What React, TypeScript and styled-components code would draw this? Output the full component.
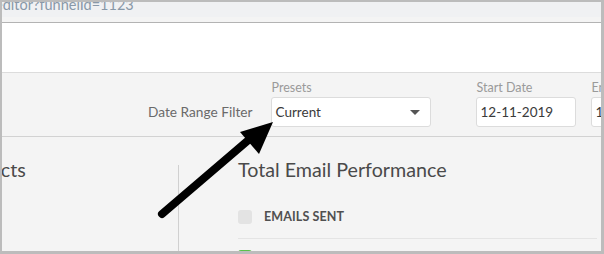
import styled, { createGlobalStyle } from "styled-components";

const Global = createGlobalStyle`
  html, body {
    margin: 0;
    padding: 0;
    background: #ffffff;
    overflow: hidden;
  }
  body {
    font-family: Lato, "Open Sans", sans-serif;
  }
`;

const Frame = styled.div`
  position: relative;
  width: 604px;
  height: 254px;
  box-sizing: border-box;
  border-style: solid;
  border-color: #bcbcbc;
  border-width: 2px 3px 3px 2px;
  overflow: hidden;
  display: flex;
  flex-direction: column;
  background: #f4f4f4;
`;

const UrlStrip = styled.div`
  height: 15px;
  background: #f0f1f3;
  overflow: hidden;
  flex-shrink: 0;
`;

const UrlText = styled.div`
  margin: -6px 0 0 -7px;
  font-size: 14.5px;
  line-height: 18px;
  color: #8898a8;
  white-space: nowrap;
`;

const PageHeader = styled.div`
  height: 49px;
  flex-shrink: 0;
  background: #ffffff;
  margin-top: 5px;
  border-top: 1px solid #b3b3b3;
  border-bottom: 1px solid #dcdcdc;
`;

const FilterBar = styled.div`
  height: 64px;
  flex-shrink: 0;
  display: flex;
  align-items: flex-end;
  padding: 0 0 9px 146px;
  box-sizing: border-box;
  border-bottom: 1px solid #d2d2d2;
  white-space: nowrap;
`;

const FilterLabel = styled.div`
  font-size: 13.7px;
  color: #6a6a6a;
  line-height: 30px;
  margin-right: 18px;
`;

const Field = styled.div<{ $width: number; $gap: number }>`
  display: flex;
  flex-direction: column;
  width: ${(p) => p.$width}px;
  margin-right: ${(p) => p.$gap}px;
  flex-shrink: 0;
`;

const FieldLabel = styled.div`
  font-size: 12.5px;
  color: #9a9a9a;
  line-height: 14px;
  margin: 0 0 2px 1px;
`;

const Box = styled.div`
  height: 30px;
  box-sizing: border-box;
  background: #ffffff;
  border: 1px solid #dcdcdc;
  border-radius: 3px;
  display: flex;
  align-items: center;
  justify-content: space-between;
  padding: 0 10px 0 4px;
  font-size: 13.5px;
  color: #3a3a3a;
`;

const Caret = styled.span`
  width: 0;
  height: 0;
  border-left: 5px solid transparent;
  border-right: 5px solid transparent;
  border-top: 5px solid #555555;
`;

const Content = styled.div`
  flex: 1;
  display: flex;
  min-height: 0;
`;

const LeftPanel = styled.div`
  width: 176px;
  flex-shrink: 0;
  border-right: 1px solid #d0d0d0;
  margin-top: 28px;
  overflow: hidden;
`;

const Heading = styled.h2<{ $shift?: number; $top?: number }>`
  margin: ${(p) => p.$top ?? 0}px 0 0 ${(p) => p.$shift ?? 0}px;
  font-size: 19.7px;
  font-weight: 400;
  color: #4a4a4a;
  line-height: 24px;
  white-space: nowrap;
  flex-shrink: 0;
`;

const RightPanel = styled.div`
  flex: 1;
  padding: 21px 4px 0 59px;
  display: flex;
  flex-direction: column;
`;

const MetricRow = styled.div`
  display: flex;
  align-items: center;
  gap: 12px;
  height: 43px;
  flex-shrink: 0;
  margin-top: 13px;
  border-bottom: 1px solid #e4e4e4;
`;

const Check = styled.span<{ $on?: boolean }>`
  width: 14px;
  height: 14px;
  border-radius: 3px;
  background: ${(p) => (p.$on ? "#5cc24a" : "#e3e3e3")};
  flex-shrink: 0;
`;

const MetricLabel = styled.span`
  font-size: 12.5px;
  font-weight: 700;
  color: #505050;
  letter-spacing: 0.1px;
`;

const NextRow = styled.div`
  display: flex;
  flex-shrink: 0;
  padding-top: 11px;
`;

const Pointer = styled.svg`
  position: absolute;
  left: 0;
  top: 0;
  pointer-events: none;
`;

export default function App() {
  return (
    <>
      <Global />
      <Frame>
        <UrlStrip>
          <UrlText>editor?funnelId=1123</UrlText>
        </UrlStrip>
        <PageHeader />
        <FilterBar>
          <FilterLabel>Date Range Filter</FilterLabel>
          <Field $width={160} $gap={45}>
            <FieldLabel>Presets</FieldLabel>
            <Box>
              Current
              <Caret />
            </Box>
          </Field>
          <Field $width={100} $gap={15}>
            <FieldLabel>Start Date</FieldLabel>
            <Box>12-11-2019</Box>
          </Field>
          <Field $width={100} $gap={0}>
            <FieldLabel>End Date</FieldLabel>
            <Box>12-11-2019</Box>
          </Field>
        </FilterBar>
        <Content>
          <LeftPanel>
            <Heading $shift={-53} $top={-7}>
              Contacts
            </Heading>
          </LeftPanel>
          <RightPanel>
            <Heading>Total Email Performance</Heading>
            <MetricRow>
              <Check />
              <MetricLabel>EMAILS SENT</MetricLabel>
            </MetricRow>
            <NextRow>
              <Check $on />
            </NextRow>
          </RightPanel>
        </Content>
        <Pointer width="604" height="254" viewBox="0 0 604 254">
          <line
            x1="160"
            y1="212"
            x2="250"
            y2="135"
            stroke="#000"
            strokeWidth="8"
            strokeLinecap="round"
          />
          <polygon points="271,120 238,130 257,152" fill="#000" />
        </Pointer>
      </Frame>
    </>
  );
}
